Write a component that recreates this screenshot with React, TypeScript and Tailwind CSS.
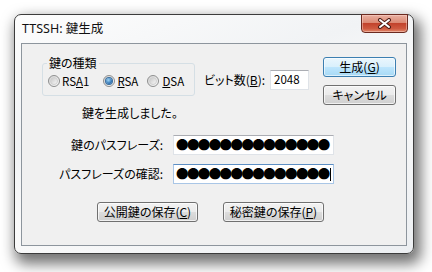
const Radio = ({ checked }: { checked?: boolean }) => (
  <span className="flex h-[12px] w-[12px] shrink-0 items-center justify-center rounded-full border border-[#8e8f8f] bg-[linear-gradient(135deg,#d4d4d4,#fbfbfb)]">
    {checked ? (
      <span className="h-[6px] w-[6px] rounded-full bg-[radial-gradient(circle_at_40%_35%,#9fd6f7,#1c63a8_75%)] shadow-[0_0_0_1px_#3a6e9e]" />
    ) : (
      <span className="h-[8px] w-[8px] rounded-full border border-[#d0d0d0] bg-[linear-gradient(135deg,#c9c9c9,#f6f6f6)]" />
    )}
  </span>
);

const btn =
  "flex h-[20px] items-center justify-center rounded-[3px] border border-[#707070] bg-[linear-gradient(to_bottom,#f2f2f2_0%,#ebebeb_50%,#dddddd_50%,#cfcfcf_100%)] shadow-[inset_0_0_0_1px_rgba(255,255,255,0.7)] text-[12px] leading-none";

const Dots = () => (
  <span className="text-[12.5px] tracking-[-1.6px] leading-none">●●●●●●●●●●●●●●</span>
);

export default function App() {
  return (
    <div className="h-[272px] w-[432px] overflow-hidden bg-white pl-[14px] pt-[14px] font-['Noto_Sans_CJK_JP',sans-serif] text-[12px] text-black [font-feature-settings:'palt']">
      <div className="flex h-[240px] w-[400px] flex-col rounded-[7px] border border-[#3c3c3c] bg-[linear-gradient(160deg,#fdfdfd_0%,#f1f3f5_35%,#fafafa_55%,#eceff2_100%)] px-[6px] pb-[7px] shadow-[4px_7px_14px_3px_rgba(0,0,0,0.55)]">
        {/* title bar */}
        <div className="flex h-[28px] items-start justify-between">
          <span className="ml-[1px] mt-[6px] font-['Noto_Sans','Noto_Sans_CJK_JP',sans-serif] text-[12.5px] leading-[16px] text-[#111]">
            TTSSH: 鍵生成
          </span>
          <div className="-mr-[1px] -mt-[1px] flex h-[19px] w-[47px] items-center justify-center rounded-b-[4px] border border-[#6b2a20] bg-[linear-gradient(to_bottom,#e9b0a2_0%,#dc8a74_45%,#c2432c_50%,#cf5a40_80%,#e18a6c_100%)] shadow-[inset_0_0_0_1px_rgba(255,220,210,0.45)]">
            <svg width="15" height="11" viewBox="0 0 15 11">
              <path d="M3 2 L12 9 M12 2 L3 9" stroke="#4a1a14" strokeWidth="4" strokeLinecap="round" />
              <path d="M3 2 L12 9 M12 2 L3 9" stroke="#ffffff" strokeWidth="2" strokeLinecap="round" />
            </svg>
          </div>
        </div>

        {/* client area */}
        <div className="flex h-[203px] flex-col border border-[#8d959d] bg-[#f0f0f0]">
          <div className="flex items-start">
            <div className="relative ml-[20px] mt-[19px] flex h-[33px] w-[153px] items-center rounded-[3px] border border-[#d5dfe5] pl-[5px]">
              <span className="absolute -top-[9px] left-[4px] bg-[#f0f0f0] px-[2px] leading-[16px]">鍵の種類</span>
              <div className="mt-[2px] flex items-center">
                <Radio />
                <span className="ml-[2px] text-[11.5px] leading-[14px]">
                  RS<u>A</u>1
                </span>
                <span className="ml-[14px]">
                  <Radio checked />
                </span>
                <span className="ml-[2px] text-[11.5px] leading-[14px]">
                  <u>R</u>SA
                </span>
                <span className="ml-[9px]">
                  <Radio />
                </span>
                <span className="ml-[3px] text-[11.5px] leading-[14px]">
                  <u>D</u>SA
                </span>
              </div>
            </div>

            <div className="ml-[9px] mt-[26px] flex h-[20px] items-center">
              <span className="leading-[14px]">
                ビット数(<u>B</u>):
              </span>
              <div className="ml-[5px] flex h-[20px] w-[39px] items-center border border-[#dfe3e8] border-t-[#abadb3] bg-white pl-[3px] text-[11.5px]">
                2048
              </div>
            </div>

            <div className="ml-[14px] mt-[13px] flex flex-col gap-[8px]">
              <div className="flex h-[20px] w-[73px] items-center justify-center rounded-[3px] border border-[#3c7fb1] bg-[linear-gradient(to_bottom,#eaf6fd_0%,#d9f0fc_50%,#bee6fd_50%,#a7d9f5_100%)] shadow-[inset_0_0_0_1px_rgba(255,255,255,0.6)] leading-none">
                生成(<u>G</u>)
              </div>
              <div className={btn + " w-[73px]"}>キャンセル</div>
            </div>
          </div>

          <div className="ml-[60px] leading-[16px]">鍵を生成しました。</div>

          <div className="mt-[14px] flex items-center">
            <span className="w-[141px] text-right leading-[14px]">鍵のパスフレーズ:</span>
            <div className="ml-[10px] flex h-[20px] w-[161px] items-center border border-[#dfe3e8] border-t-[#abadb3] bg-white pl-[2px]">
              <Dots />
            </div>
          </div>

          <div className="mt-[9px] flex items-center">
            <span className="w-[141px] text-right leading-[14px]">パスフレーズの確認:</span>
            <div className="ml-[10px] flex h-[20px] w-[161px] items-center border border-[#a9c6e6] border-t-[#5d8fc4] bg-white pl-[2px]">
              <Dots />
              <span className="ml-[1px] h-[13px] w-[1px] bg-black" />
            </div>
          </div>

          <div className="ml-[75px] mt-[18px] flex gap-[25px]">
            <div className={btn + " w-[101px]"}>
              公開鍵の保存(<u>C</u>)
            </div>
            <div className={btn + " w-[101px]"}>
              秘密鍵の保存(<u>P</u>)
            </div>
          </div>
        </div>
      </div>
    </div>
  );
}
